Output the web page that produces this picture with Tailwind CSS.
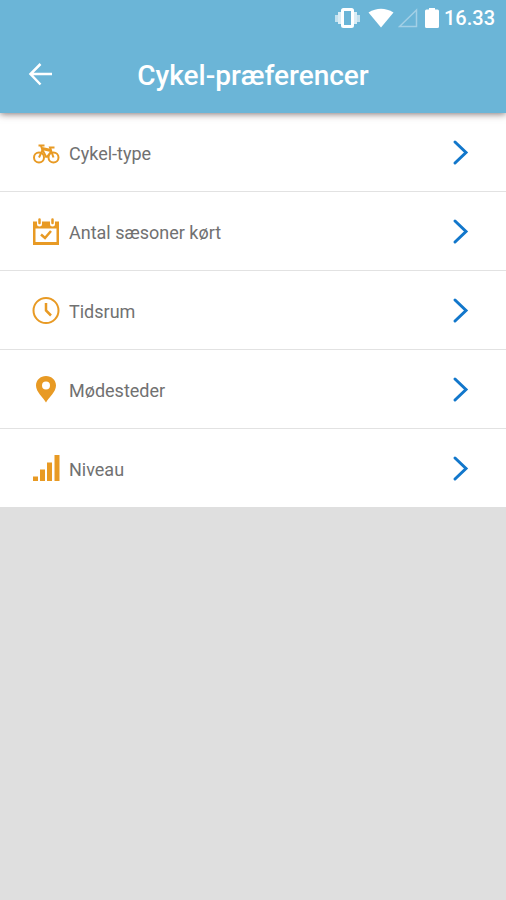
<!DOCTYPE html>
<html lang="da">
<head>
<meta charset="utf-8">
<meta name="viewport" content="width=device-width, initial-scale=1">
<title>Cykel-præferencer</title>
<script src="https://cdn.jsdelivr.net/npm/@tailwindcss/browser@4"></script>
</head>
<body class="min-h-screen bg-[#dfdfdf] font-['Roboto',sans-serif]">
<header class="relative bg-[#6bb5d7] text-white shadow-[0_1px_7px_rgba(60,40,40,0.65)]">
  <div class="flex h-9 items-center justify-end pr-[11px]">
    <svg class="mr-[7px] h-5 w-7" viewBox="0 0 28 20" fill="none" stroke="currentColor" aria-hidden="true">
      <rect x="9.500" y="1.500" width="10" height="17" rx="1" stroke-width="3"/>
      <path d="M6.500 4v12M22.500 4v12" stroke-width="3" opacity=".75"/>
      <path d="M3.500 7v7M25.500 7v7" stroke-width="3" opacity=".6"/>
    </svg>
    <svg class="mr-1 h-5 w-[26px]" viewBox="0 0 26 20" fill="currentColor" aria-hidden="true"><path d="M.500 4.500Q13-3 25.500 4.500L13 19.500Z"/></svg>
    <svg class="mr-[6px] h-5 w-5" viewBox="0 0 20 20" fill="none" stroke="#a3d0e6" stroke-width="1.500" aria-hidden="true"><path d="M1.500 18.500h17V2Z"/></svg>
    <svg class="mr-1 h-5 w-4" viewBox="0 0 16 20" fill="currentColor" aria-hidden="true"><path d="M5 0h6v1.500h2.500q1.500 0 1.500 1.500v15.500q0 1.500-1.500 1.500h-11Q1 20 1 18.500V3Q1 1.500 2.500 1.500H5Z"/></svg>
    <span class="text-xl font-medium">16.33</span>
  </div>
  <div class="grid h-[77px] grid-cols-[80px_1fr_80px] items-center">
    <button type="button" aria-label="Tilbage" class="flex h-full items-center pl-7">
      <svg class="h-6 w-6" viewBox="0 0 24 24" fill="none" stroke="currentColor" stroke-width="2.500" aria-hidden="true"><path d="M12.500 1 2.500 11l10 10.500M2.500 11H24"/></svg>
    </button>
    <h1 class="pt-[2px] text-center text-[28px] font-medium">Cykel-præferencer</h1>
  </div>
</header>
<main>
  <ul class="divide-y divide-[#e2e2e2] bg-white text-lg text-[#717171]">
    <li><button type="button" class="flex h-[78px] w-full items-center gap-[9px] pr-9 pl-8 text-left">
      <svg class="h-7 w-7" viewBox="0 0 28 28" fill="none" stroke="#e89a24" stroke-width="2" aria-hidden="true"><circle cx="7" cy="19.500" r="5"/><circle cx="21.500" cy="19.500" r="5"/><path d="m7 19.500 3.500-7.500 4 7.500M14.500 19.500l5-6.500M21.500 19.500 18 9.500h4.500" stroke-width="2"/><path d="M10.500 12 9 8M6.500 7.500h6"/><path d="m10 10.500 9 2" stroke-width="3"/></svg>
      <span class="flex-1 pt-1">Cykel-type</span>
      <svg class="h-7 w-5" viewBox="0 0 20 28" fill="none" stroke="#1277cb" stroke-width="3" stroke-linecap="round" aria-hidden="true"><path d="m5 4 11 10.500L5 25"/></svg>
    </button></li>
    <li><button type="button" class="flex h-[78px] w-full items-center gap-[9px] pr-9 pl-8 text-left">
      <svg class="h-7 w-7" viewBox="0 0 28 28" aria-hidden="true"><path fill="#e89a24" fill-rule="evenodd" d="M1 4.500h26V28H1ZM3.500 11.500V25h21V11.500Z"/><g stroke-linecap="round"><path d="M7.500 3v4M20.500 3v4" stroke="#fff" stroke-width="5"/><path d="M7.500 2.500V6M20.500 2.500V6" stroke="#e89a24" stroke-width="2.500"/></g><path d="m9 17.500 4 3.500 6-7" fill="none" stroke="#e89a24" stroke-width="2.500"/></svg>
      <span class="flex-1 pt-1">Antal sæsoner kørt</span>
      <svg class="h-7 w-5" viewBox="0 0 20 28" fill="none" stroke="#1277cb" stroke-width="3" stroke-linecap="round" aria-hidden="true"><path d="m5 4 11 10.500L5 25"/></svg>
    </button></li>
    <li><button type="button" class="flex h-[78px] w-full items-center gap-[9px] pr-9 pl-8 text-left">
      <svg class="h-7 w-7" viewBox="0 0 28 28" fill="none" stroke="#e89a24" stroke-width="2" aria-hidden="true"><circle cx="14" cy="14.500" r="12.500"/><path d="M14 7v7.500l5 5" stroke-width="2.500"/></svg>
      <span class="flex-1 pt-1">Tidsrum</span>
      <svg class="h-7 w-5" viewBox="0 0 20 28" fill="none" stroke="#1277cb" stroke-width="3" stroke-linecap="round" aria-hidden="true"><path d="m5 4 11 10.500L5 25"/></svg>
    </button></li>
    <li><button type="button" class="flex h-[78px] w-full items-center gap-[9px] pr-9 pl-8 text-left">
      <svg class="h-7 w-7" viewBox="0 0 28 28" fill="#e89a24" aria-hidden="true"><path fill-rule="evenodd" d="M14 1C8.500 1 4 5 4 10.500 4 17 11 22 14 27.500 17 22 24 17 24 10.500 24 5 19.500 1 14 1Zm0 5.500a4 4 0 1 1 0 8 4 4 0 0 1 0-8Z"/></svg>
      <span class="flex-1 pt-1">Mødesteder</span>
      <svg class="h-7 w-5" viewBox="0 0 20 28" fill="none" stroke="#1277cb" stroke-width="3" stroke-linecap="round" aria-hidden="true"><path d="m5 4 11 10.500L5 25"/></svg>
    </button></li>
    <li><button type="button" class="flex h-[78px] w-full items-center gap-[9px] pr-9 pl-8 text-left">
      <svg class="h-7 w-7" viewBox="0 0 28 28" fill="#e89a24" aria-hidden="true"><path d="M1 22.500h5V27H1ZM8 15.500h5V27H8ZM15 8.500h5V27h-5ZM22.500 1h5v26h-5Z"/></svg>
      <span class="flex-1 pt-1">Niveau</span>
      <svg class="h-7 w-5" viewBox="0 0 20 28" fill="none" stroke="#1277cb" stroke-width="3" stroke-linecap="round" aria-hidden="true"><path d="m5 4 11 10.500L5 25"/></svg>
    </button></li>
  </ul>
</main>
</body>
</html>
